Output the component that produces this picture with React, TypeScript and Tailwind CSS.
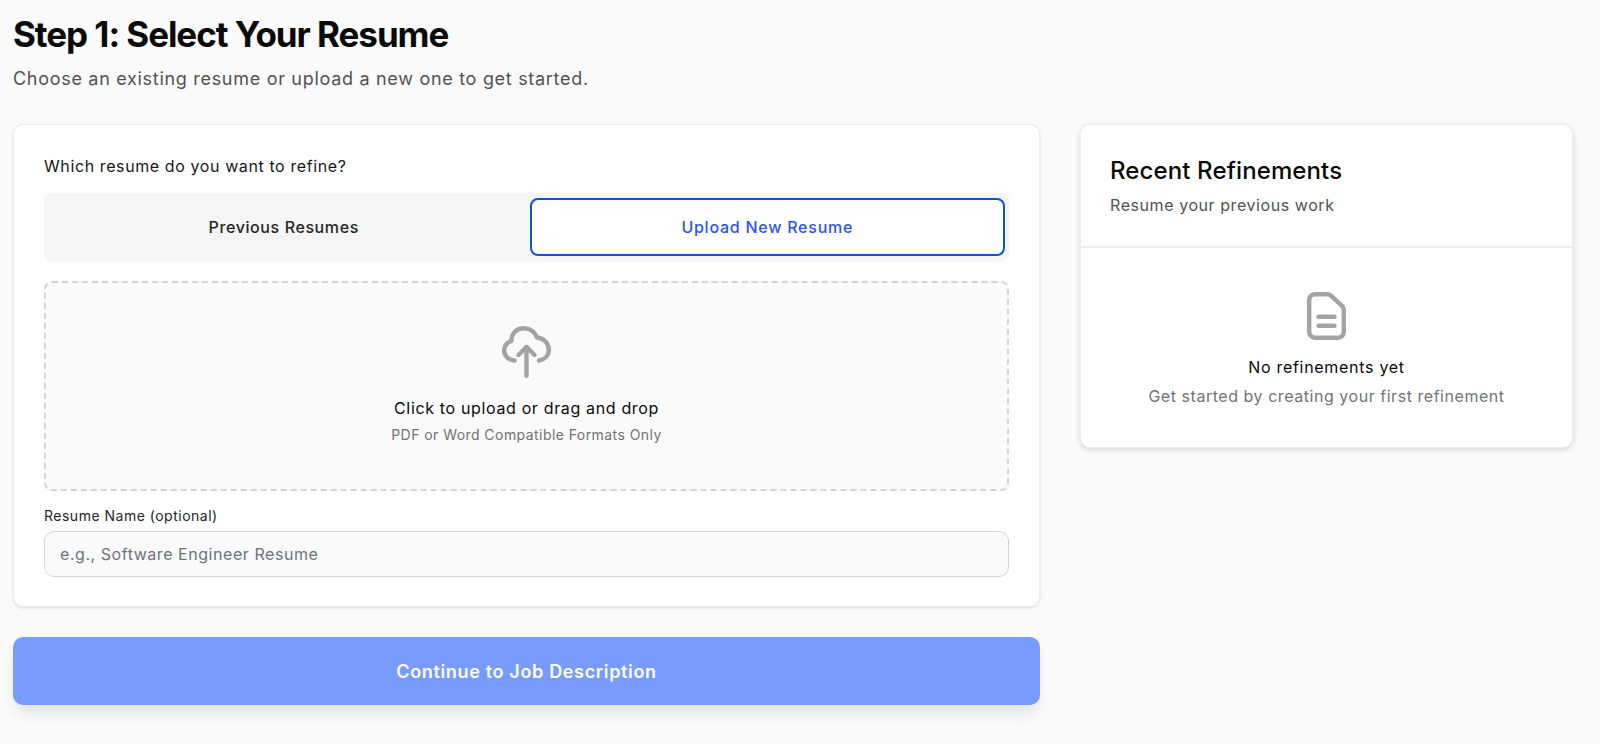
const font = "font-['Inter',sans-serif]";

function CloudUploadIcon() {
  return (
    <svg width="49" height="52" viewBox="0 0 49 52" fill="none" stroke="#a3a3a3" strokeWidth="4.4" strokeLinecap="round" strokeLinejoin="round">
      <path d="M12.5 34.5C6.5 34 2.2 30 2.2 24.5C2.2 20 5 16.5 9.5 15C9 8 14.5 2.2 22 2.2C28 2.2 33 6 35 11.5C41.5 12 46.8 17 46.8 24C46.8 29.5 42.5 33.5 37 34.5" />
      <path d="M24.5 49.8V21" />
      <path d="M16.5 29L24.5 21L32.5 29" />
    </svg>
  );
}

function FileIcon() {
  return (
    <svg width="39" height="48" viewBox="0 0 39 48" fill="none" stroke="#a3a3a3" strokeWidth="4.4" strokeLinecap="round" strokeLinejoin="round">
      <path d="M8 2.2H20.5C21.8 2.2 23 2.7 24 3.6L35.3 14.2C36.3 15.2 36.8 16.4 36.8 17.8V39.8C36.8 43 34.2 45.8 31 45.8H8C4.8 45.8 2.2 43 2.2 39.8V8C2.2 4.8 4.8 2.2 8 2.2Z" />
      <path d="M11.5 24.7H27.5" />
      <path d="M11.5 33.7H27.5" />
    </svg>
  );
}

export default function App() {
  return (
    <div className={`${font} min-h-screen bg-[#fafafa] px-[13px] pt-[13px] text-[#0a0a0a]`}>
      <h1 className="text-[35px] leading-[42px] font-bold tracking-[-0.03em]">Step 1: Select Your Resume</h1>
      <p className="mt-[10px] text-[18px] leading-[28px] tracking-[0.7px] text-[#525252]">Choose an existing resume or upload a new one to get started.</p>

      <div className="mt-[31px] flex items-start gap-[40px] pr-[14px]">
        <div className="flex w-[1027px] flex-col gap-[30px]">
          <div className="rounded-[10px] border border-[#ececec] bg-white px-[30px] pt-[29px] pb-[29px] shadow-[0_1px_3px_rgba(0,0,0,0.12)]">
            <p className="text-[16px] leading-[24px] font-normal tracking-[0.6px] text-[#171717]">Which resume do you want to refine?</p>

            <div className="mt-[15px] flex h-[68px] gap-[10px] rounded-[8px] bg-[#f5f5f5] px-[4px] py-[5px] shadow-[0_0_3px_rgba(0,0,0,0.04)]">
              <button className="flex-1 rounded-[8px] text-[16px] font-medium tracking-[0.6px] text-[#262626]">Previous Resumes</button>
              <button className="flex-1 rounded-[8px] border-2 border-[#0b55d4] bg-white text-[16px] font-medium tracking-[0.75px] text-[#2b55f0]">Upload New Resume</button>
            </div>

            <div className="mt-[20px] flex h-[210px] flex-col items-center rounded-[8px] border-2 border-dashed border-[#d4d4d4] bg-[#fafafa] pt-[43px]">
              <CloudUploadIcon />
              <p className="mt-[18px] text-[16px] leading-[24px] font-normal tracking-[0.65px] text-[#0a0a0a]">Click to upload or drag and drop</p>
              <p className="mt-[3px] text-[14px] leading-[24px] tracking-[0.44px] text-[#737373]">PDF or Word Compatible Formats Only</p>
            </div>

            <label className="mt-[15px] block text-[14px] leading-[20px] font-normal tracking-[0.5px] text-[#262626]">Resume Name (optional)</label>
            <input
              className="mt-[5px] block h-[46px] w-full rounded-[10px] border border-[#d4d4d4] bg-[#fafafa] px-[15px] text-[16px] tracking-[0.55px] placeholder:text-[#6b7280]"
              placeholder="e.g., Software Engineer Resume"
            />
          </div>

          <button className="h-[68px] w-full rounded-[10px] bg-[#789bff] text-[18px] font-semibold tracking-[0.66px] text-white shadow-[0_10px_15px_-3px_rgba(0,0,0,0.1)]">Continue to Job Description</button>
        </div>

        <div className="flex-1 rounded-[10px] border border-[#ececec] bg-white shadow-[0_2px_6px_rgba(0,0,0,0.14)]">
          <div className="border-b-2 border-[#ececec] px-[29px] pt-[30px] pb-[29px]">
            <h2 className="text-[24px] leading-[32px] font-medium tracking-[0.12px] text-[#0a0a0a]">Recent Refinements</h2>
            <p className="mt-[6px] text-[16px] leading-[24px] tracking-[0.57px] text-[#525252]">Resume your previous work</p>
          </div>
          <div className="flex flex-col items-center pt-[44px] pb-[39px]">
            <FileIcon />
            <p className="mt-[15px] text-[16px] leading-[24px] font-normal tracking-[0.7px] text-[#0a0a0a]">No refinements yet</p>
            <p className="mt-[5px] text-[16px] leading-[24px] tracking-[0.54px] text-[#737373]">Get started by creating your first refinement</p>
          </div>
        </div>
      </div>
    </div>
  );
}
